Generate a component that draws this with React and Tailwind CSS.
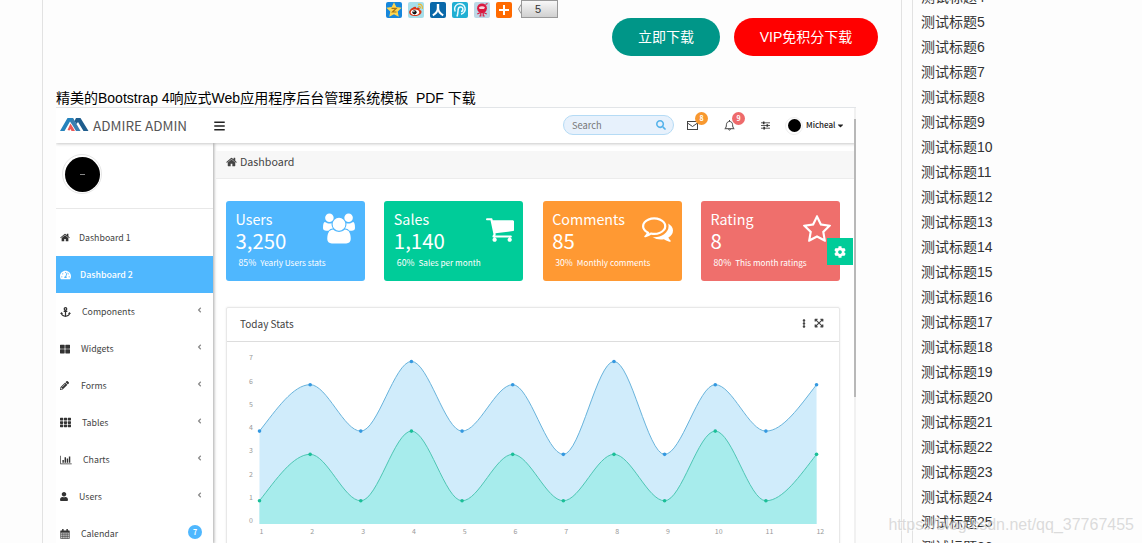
import { FaTachometerAlt, FaAnchor, FaThLarge, FaPencilAlt, FaTh, FaUser, FaBars, FaSearch, FaEllipsisV, FaExpandArrowsAlt, FaCog, FaCaretDown, FaAngleLeft } from 'react-icons/fa';

const HOME_PATH =
  'M1472 992v480q0 26-19 45t-45 19h-384v-384h-256v384h-384q-26 0-45-19t-19-45v-480q0-1 .5-3t.5-3l575-474 575 474q1 2 1 6zm223-69l-62 74q-8 9-21 11h-3q-13 0-21-7l-692-577-692 577q-12 8-24 7-13-2-21-11l-62-74q-8-10-7-23.5t11-21.5l719-599q32-26 76-26t76 26l244 204v-195q0-14 9-23t23-9h192q14 0 23 9t9 23v408l219 182q10 8 11 21.5t-7 23.5z';
const BARS_PATH =
  'M640 896v512h-256v-512h256zm384-512v1024h-256v-1024h256zm1024 1152v128h-2048v-1536h128v1408h1920zm-640-896v768h-256v-768h256zm384-384v1152h-256v-1152h256z';
const USERS_PATH =
  'M593 896q-162 5-265 128h-134q-82 0-138-40.5t-56-118.5q0-353 124-353 6 0 43.5 21t97.5 42.5 119 21.5q67 0 133-23-5 37-5 66 0 139 81 256zm1071 637q0 120-73 189.5t-194 69.5h-874q-121 0-194-69.5t-73-189.5q0-53 3.5-103.5t14-109 26.5-108.5 43-97.5 62-81 85.5-53.5 111.5-20q10 0 43 21.5t73 48 107 48 135 21.5 135-21.5 107-48 73-48 43-21.5q61 0 111.5 20t85.5 53.5 62 81 43 97.5 26.5 108.5 14 109 3.5 103.5zm-1024-1277q0 106-75 181t-181 75-181-75-75-181 75-181 181-75 181 75 75 181zm704 384q0 159-112.5 271.5t-271.5 112.5-271.5-112.5-112.5-271.5 112.5-271.5 271.5-112.5 271.5 112.5 112.5 271.5zm576 225q0 78-56 118.5t-138 40.5h-134q-103-123-265-128 81-117 81-256 0-29-5-66 66 23 133 23 59 0 119-21.5t97.5-42.5 43.5-21q124 0 124 353zm-128-609q0 106-75 181t-181 75-181-75-75-181 75-181 181-75 181 75 75 181z';
const CART_PATH =
  'M640 1536q0 52-38 90t-90 38-90-38-38-90 38-90 90-38 90 38 38 90zm896 0q0 52-38 90t-90 38-90-38-38-90 38-90 90-38 90 38 38 90zm128-1088v512q0 24-16.5 42.5t-40.5 21.5l-1044 122q13 60 13 70 0 16-24 64h920q26 0 45 19t19 45-19 45-45 19h-1024q-26 0-45-19t-19-45q0-11 8-31.5t16-36 21.5-40 15.5-29.5l-177-823h-204q-26 0-45-19t-19-45 19-45 45-19h256q16 0 28.5 6.5t19.5 15.5 13 24.5 8 26 5.5 29.5 4.5 26h1201q26 0 45 19t19 45z';
const COMMENTS_PATH =
  'M704 384q-153 0-286 52t-211.5 141-78.5 191q0 82 53 158t149 132l97 56-35 84q34-20 62-39l44-31 53 10q78 14 153 14 153 0 286-52t211.5-141 78.5-191-78.5-191-211.5-141-286-52zm0-128q191 0 353.5 68.5t256.5 186.5 94 257-94 257-256.5 186.5-353.5 68.5q-86 0-176-16-124 88-278 128-36 9-86 16h-3q-11 0-20.5-8t-11.5-21q-1-3-1-6.5t.5-6.5 2-6l2.5-5 3.5-5.5 4-5 4.5-5 4-4.5q5-6 23-25t26-29.5 22.5-29 25-38.5 20.5-44q-124-72-195-177t-71-224q0-139 94-257t256.5-186.5 353.5-68.5zm822 1169q10 24 20.5 44t25 38.5 22.5 29 26 29.5 23 25q1 1 4 4.5t4.5 5 4 5 3.5 5.5l2.5 5 2 6 .5 6.5-1 6.5q-3 14-13 22t-22 7q-50-7-86-16-154-40-278-128-90 16-176 16-271 0-472-132 58 4 88 4 161 0 309-45t264-129q125-92 192-212t67-254q0-77-23-152 129 71 204 178t75 230q0 120-71 224.5t-195 176.5z';
const STAR_PATH =
  'M1201 1004l306-297-422-62-189-382-189 382-422 62 306 297-73 421 378-199 377 199zm527-357q0 22-26 48l-363 354 86 500q1 7 1 20 0 50-41 50-19 0-40-12l-449-236-449 236q-22 12-40 12-21 0-31.5-14.5t-10.5-35.5q0-6 2-20l86-500-364-354q-25-27-25-48 0-37 56-46l502-73 225-455q19-41 49-41t49 41l225 455 502 73q56 9 56 46z';

function Glyph({ path, viewBox, className }) {
  return (
    <svg viewBox={viewBox} className={className} fill="currentColor">
      <path d={path} />
    </svg>
  );
}

const HomeIcon = ({ className }) => <Glyph path={HOME_PATH} viewBox="64 128 1664 1536" className={className} />;
const ChartsIcon = ({ className }) => <Glyph path={BARS_PATH} viewBox="0 0 2048 1792" className={className} />;

function CalendarIcon({ className }) {
  return (
    <svg viewBox="0 0 13 14" className={className} fill="none" stroke="currentColor">
      <path d="M.5 2.500h12v11H.5zM.5 5.500h12M3.500 5.500v8M6.500 5.500v8M9.500 5.500v8M.5 8.200h12M.5 10.800h12" />
      <path d="M.5 3.800h12M3.500 0v4M9.500 0v4" strokeWidth="2" />
    </svg>
  );
}

const menu = [
  { label: 'Dashboard 1', icon: HomeIcon, iconClass: 'w-[10px] h-[9px]', gap: 'ml-[9px]' },
  { label: 'Dashboard 2', icon: FaTachometerAlt, iconClass: 'w-[11px] h-[10px]', gap: 'ml-[9px]', active: true },
  { label: 'Components', icon: FaAnchor, iconClass: 'w-[11px] h-[10px]', gap: 'ml-[11px]', arrow: true },
  { label: 'Widgets', icon: FaThLarge, iconClass: 'w-[10px] h-[10px]', gap: 'ml-[11px]', arrow: true },
  { label: 'Forms', icon: FaPencilAlt, iconClass: 'w-[9px] h-[9px]', gap: 'ml-[12px]', arrow: true },
  { label: 'Tables', icon: FaTh, iconClass: 'w-[11px] h-[11px]', gap: 'ml-[11px]', arrow: true },
  { label: 'Charts', icon: ChartsIcon, iconClass: 'w-[12px] h-[10px]', gap: 'ml-[11px]', arrow: true },
  { label: 'Users', icon: FaUser, iconClass: 'w-[8px] h-[9px]', gap: 'ml-[11px]', arrow: true },
  { label: 'Calendar', icon: CalendarIcon, iconClass: 'w-[10px] h-[10px]', gap: 'ml-[11px]', badge: 7 },
];

const cards = [
  { title: 'Users', value: '3,250', percent: '85%', text: 'Yearly Users stats', color: 'bg-[#4fb7fe]', path: USERS_PATH, viewBox: '0 0 1920 1792', iconClass: 'w-[32px] h-[31px] mt-[12px] mr-[10px]' },
  { title: 'Sales', value: '1,140', percent: '60%', text: 'Sales per month', color: 'bg-[#00cc99]', path: CART_PATH, viewBox: '0 256 1664 1408', iconClass: 'w-[28px] h-[24px] mt-[17px] mr-[9px]' },
  { title: 'Comments', value: '85', percent: '30%', text: 'Monthly comments', color: 'bg-[#ff9933]', path: COMMENTS_PATH, viewBox: '0 256 1792 1410', iconClass: 'w-[31px] h-[25px] mt-[16px] mr-[9px]' },
  { title: 'Rating', value: '8', percent: '80%', text: 'This month ratings', color: 'bg-[#ef6f6c]', path: STAR_PATH, viewBox: '64 32 1664 1590', iconClass: 'w-[28px] h-[27px] mt-[14px] mr-[9px]' },
];

const blueSeries = [4, 6, 4, 7, 4, 6, 3, 7, 3, 6, 4, 6];
const greenSeries = [1, 3, 1, 4, 1, 3, 1, 3, 1, 4, 1, 3];

// chart geometry, in px inside the chart body
const X0 = 32.5;
const STEP = 50.64;
const BASE = 182;
const UNIT = 23.22;

const toPoints = (series) => series.map((v, i) => [X0 + i * STEP, BASE - v * UNIT]);

// monotone cubic line: flat at every peak and valley
function smoothPath(points) {
  const last = points.length - 1;
  const slope = (i) => (points[i + 1][1] - points[i][1]) / STEP;
  const tangents = points.map((p, i) => {
    if (i === 0) return slope(0) * 1.4;
    if (i === last) return slope(last - 1) * 1.4;
    return 0;
  });
  let d = `M${points[0][0]} ${points[0][1]}`;
  for (let i = 0; i < last; i++) {
    const [x1, y1] = points[i];
    const [x2, y2] = points[i + 1];
    const dx = STEP / 3;
    d += `C${x1 + dx} ${y1 + tangents[i] * dx} ${x2 - dx} ${y2 - tangents[i + 1] * dx} ${x2} ${y2}`;
  }
  return d;
}

function Series({ data, fill, line, dot }) {
  const points = toPoints(data);
  const path = smoothPath(points);
  return (
    <g>
      <path d={`${path}V${BASE}H${X0}Z`} fill={fill} />
      <path d={path} fill="none" stroke={line} strokeWidth="1" />
      {points.map(([x, y], i) => (
        <circle key={i} cx={x} cy={y} r="1.8" fill={dot} />
      ))}
    </g>
  );
}

function StatsChart() {
  return (
    <svg width="612" height="210" viewBox="0 0 612 210" className="block">
      <Series data={blueSeries} fill="#d0ecfb" line="#69b4dc" dot="#3498e0" />
      <Series data={greenSeries} fill="#a7ecec" line="#4fc6b4" dot="#1bbf98" />
      <g fill="#999" fontSize="7">
        {[0, 1, 2, 3, 4, 5, 6, 7].map((n) => (
          <text key={n} x="24" y={181 - n * 23.22} textAnchor="middle">{n}</text>
        ))}
        {blueSeries.map((_, i) => (
          <text key={i} x={34.5 + i * 50.8} y="192" textAnchor="middle">{i + 1}</text>
        ))}
      </g>
    </svg>
  );
}

function ShareBar() {
  return (
    <div className="flex h-[18px] pl-[343px]">
      <div className="flex gap-[6px] pt-[2px]">
        <svg width="16" height="16" viewBox="0 0 16 16">
          <rect width="16" height="16" rx="2" fill="#1687dc" />
          <path d="M8 .3l2.300 4.700 5.400.7-4 3.700 1 5.400L8 12.300l-4.700 2.500 1-5.400-4-3.700 5.400-.7z" fill="#ffd64f" />
          <path d="M5.500 6.300h4.800L6.500 10h4" fill="none" stroke="#a87412" strokeWidth="1.200" />
        </svg>
        <svg width="16" height="16" viewBox="0 0 16 16">
          <rect width="16" height="16" rx="2" fill="#a6deea" />
          <path d="M7 4.700c-3 .7-6.200 3.600-5.800 6 .4 2.700 4 3.700 7.300 3.200 3.400-.6 5.300-2.700 5-4.500-.3-1.400-2-1.400-2-1.400s1-2.300-1.200-2.400C9 5.500 8 6.400 8 6.400s.7-2.100-1-1.700z" fill="#d93516" />
          <ellipse cx="7" cy="10.300" rx="4.200" ry="2.800" fill="#fff" />
          <circle cx="6.500" cy="10.300" r="2.100" fill="#111" />
          <circle cx="5.900" cy="9.600" r=".7" fill="#fff" />
          <path d="M10 2.300c3-.6 5 1.500 4.300 4.600M10.200 4.400c1.500-.3 2.500.5 2.200 2" fill="none" stroke="#eeb62d" strokeWidth="1.200" />
        </svg>
        <svg width="16" height="16" viewBox="0 0 16 16">
          <rect width="16" height="16" rx="2" fill="#0968a9" />
          <path d="M7.800 2v4c0 3-1.800 5.600-5 7.300M8.200 2v4c0 3 1.800 5.600 5 7.300" fill="none" stroke="#fff" strokeWidth="2" />
        </svg>
        <svg width="16" height="16" viewBox="0 0 16 16">
          <rect width="16" height="16" rx="2" fill="#20afd3" />
          <path d="M3.200 9.500A5.300 5.300 0 1 1 9 12.200" fill="none" stroke="#e9fbff" strokeWidth="1.500" />
          <path d="M5 14.500C6 12 5.800 9.500 6.300 7.200a2.300 2.300 0 1 1 2.700 2.300" fill="none" stroke="#e9fbff" strokeWidth="1.500" />
        </svg>
        <svg width="16" height="16" viewBox="0 0 16 16">
          <rect width="16" height="16" rx="2" fill="#bcd8e6" />
          <circle cx="8" cy="6.300" r="4.900" fill="#db193f" />
          <path d="M5 5.200c1.600-1.300 4.400-1.300 6 0l-1 1.800H5.500z" fill="#f7d5dc" />
          <path d="M11.500 2.500l2-1M6.300 10.500l-3 1.500M6.800 10.500v3.500h-1.500M9.200 10.500v3.500h1.500M9.700 10.500l3 1.500" stroke="#db193f" strokeWidth="1.200" fill="none" />
        </svg>
        <svg width="16" height="16" viewBox="0 0 16 16">
          <rect width="16" height="16" rx="2" fill="#ff6a00" />
          <path d="M8 3v10M3 8h10" stroke="#fff" strokeWidth="2" />
        </svg>
      </div>
      <div className="flex ml-[6px]">
        <svg width="3" height="18" viewBox="0 0 3 18">
          <path d="M3 4.500L.5 9 3 13.500" fill="#eee" stroke="#999" />
        </svg>
        <div className="w-[37px] h-[18px] border border-[#999] bg-linear-to-b from-[#f8f8f8] to-[#d0d0d0] text-[11px] leading-[17px] text-center text-[#333]">
          <span className="mr-[3px]">5</span>
        </div>
      </div>
    </div>
  );
}

function TopBar() {
  return (
    <div className="relative z-10 flex items-center h-[35px] bg-white shadow-[0_1px_3px_rgba(0,0,0,0.22)] text-[#444]">
      <svg width="29" height="13" viewBox="0 0 29 13" className="ml-[4px] -mt-[3px]">
        <path d="M0 13L7.500 0H13l1.500 3.500-2 3L10 3.500 4.500 13z" fill="#2583bd" />
        <path d="M7.500 12L10.500 5.500l4.500 7.500h-3.500l-1-2-1 1.500z" fill="#ee5755" />
        <path d="M13 0l7.500 13H16L10.500 4z" fill="#3a7fb0" />
        <path d="M14.500 3L16 0h4.500L28.500 13H23.500L18 4l-1.500 2z" fill="#1f5d8d" />
      </svg>
      <span className="ml-[4px] w-[95px] text-[13.500px] leading-[18px] whitespace-nowrap text-[#555] -mt-[2px]">ADMIRE ADMIN</span>
      <FaBars className="ml-[26px] w-[11px] h-[12px] text-[#222]" />
      <div className="flex items-center justify-between ml-[338px] -mt-[2px] w-[111px] h-[20px] px-[8px] rounded-full border border-[#b5dbf5] bg-[#e7f1fc]">
        <span className="text-[9.300px] leading-[14px] text-[#777]">Search</span>
        <FaSearch className="w-[10px] h-[10px] -mr-[1px] text-[#56b3ea]" />
      </div>
      <div className="relative ml-[13px]">
        <svg width="11" height="9" viewBox="0 0 11 9" fill="none" stroke="#444" className="block">
          <rect x=".5" y=".5" width="10" height="8" />
          <path d="M.5 2L5.500 5.500l5-3.500" />
        </svg>
        <span className="absolute -top-[9px] left-[8px] w-[13px] h-[13px] rounded-full bg-[#f8982f] text-white text-[7px] leading-[13px] font-bold text-center">8</span>
      </div>
      <div className="relative ml-[26px]">
        <svg width="11" height="11" viewBox="0 0 11 11" fill="none" stroke="#444" className="block">
          <path d="M.8 8.700c1.400-1 1.500-2.200 1.600-4C2.600 2.600 3.700 1.500 5.500 1.500s2.900 1.100 3.100 3.200c.1 1.800.2 3 1.600 4zM5.500 0v1.500M4.500 9.200c.2 1.200 1.800 1.200 2 0" />
        </svg>
        <span className="absolute -top-[8px] left-[8px] w-[13px] h-[13px] rounded-full bg-[#ee6a6b] text-white text-[7px] leading-[13px] font-bold text-center">9</span>
      </div>
      <svg width="9" height="9" viewBox="0 0 10 9" className="ml-[26px]" stroke="#333">
        <path d="M0 1.500h10M0 4.500h10M0 7.500h10" strokeWidth=".9" />
        <path d="M3 0v3M7 3v3M3.500 6v3" strokeWidth="1.800" />
      </svg>
      <div className="flex items-center justify-center ml-[15px] w-[18px] h-[18px] rounded-full border border-[#eee] bg-white">
        <div className="w-[13px] h-[13px] rounded-full bg-black" />
      </div>
      <span className="ml-[3px] w-[29px] -mt-[2px] text-[8px] leading-[12px] font-medium whitespace-nowrap text-[#222]">Micheal</span>
      <FaCaretDown className="w-[7px] h-[9px] ml-[2px] text-[#222]" />
    </div>
  );
}

function Sidebar() {
  return (
    <div className="w-[157px] shrink-0 bg-white text-[#444] shadow-[1px_0_3px_rgba(0,0,0,0.35)]">
      <div className="h-[66px] border-b border-[#e8e8e8] pt-[11px] pl-[6px]">
        <div className="flex items-center justify-center w-[40px] h-[40px] rounded-full border border-[#e6e6e6] bg-white">
          <div className="flex items-center justify-center w-[35px] h-[35px] rounded-full bg-black">
            <div className="w-[5px] h-px bg-[#888]" />
          </div>
        </div>
      </div>
      <div className="pt-[10px]">
        {menu.map(({ label, icon: Icon, iconClass, gap, active, arrow, badge }) => (
          <div
            key={label}
            className={`flex items-center h-[37px] pl-[4px] text-[8.800px] leading-[14px] ${active ? 'bg-[#4fb7fe] text-white font-medium' : ''}`}
          >
            <Icon className={`${iconClass} shrink-0 ${active ? '' : 'text-[#333]'}`} />
            <span className={gap}>{label}</span>
            {arrow && <FaAngleLeft className="w-[7px] h-[8px] ml-auto mr-[10px] mb-[4px] text-[#888]" />}
            {badge && (
              <span className="flex items-center justify-center w-[14px] h-[14px] ml-auto mr-[11px] mb-[4px] rounded-full bg-[#4fb7fe] text-white text-[7px] font-bold">
                {badge}
              </span>
            )}
          </div>
        ))}
      </div>
    </div>
  );
}

function StatCard({ card }) {
  return (
    <div className={`flex items-start justify-between w-[139px] h-[80px] rounded-[3px] text-white ${card.color}`}>
      <div className="pl-[9.500px] pt-[7px] whitespace-nowrap w-0">
        <div className="text-[14.300px] leading-[21px]">{card.title}</div>
        <div className="text-[20.400px] leading-[23px]">{card.value}</div>
        <div className="flex gap-[4px] pl-[3px] mt-[4px] leading-[13px]">
          <span className="text-[8.700px]">{card.percent}</span>
          <span className="text-[8.200px]">{card.text}</span>
        </div>
      </div>
      <Glyph path={card.path} viewBox={card.viewBox} className={card.iconClass} />
    </div>
  );
}

function Dashboard() {
  return (
    <div className="relative w-[800px] h-[436px] overflow-hidden bg-white border-t border-[#e2e5e8] font-['Noto_Sans_CJK_SC',sans-serif]">
      <TopBar />
      <div className="flex h-[401px]">
        <Sidebar />
        <div className="flex-1 pl-[3px] pt-[8px]">
          <div className="flex items-center h-[28px] pl-[10px] pb-[5px] bg-[#f7f7f7] border-b border-[#ececec] text-[#444]">
            <HomeIcon className="w-[11px] h-[10px]" />
            <span className="ml-[3px] text-[10.700px] leading-[16px]">Dashboard</span>
          </div>
          <div className="flex justify-between ml-[10px] mt-[22px] w-[614px]">
            {cards.map((card) => (
              <StatCard key={card.title} card={card} />
            ))}
          </div>
          <div className="ml-[10px] mt-[26px] w-[614px] h-[260px] rounded-[2px] border border-[#e8e8e8] shadow-[0_0_2px_rgba(0,0,0,0.1)]">
            <div className="flex items-center h-[34px] pl-[13px] pr-[15px] pb-[3px] border-b border-[#ddd] text-[#444]">
              <span className="text-[10px] leading-[15px]">Today Stats</span>
              <FaEllipsisV className="ml-auto w-[6px] h-[9px]" />
              <FaExpandArrowsAlt className="ml-[7px] w-[10px] h-[10px]" />
            </div>
            <StatsChart />
          </div>
        </div>
      </div>
      {/* settings handle */}
      <div className="absolute right-[3px] top-[130px] z-20 flex items-center justify-center w-[26px] h-[27px] bg-[#00cc99] text-white">
        <FaCog className="w-[12px] h-[12px]" />
      </div>
      {/* scrollbar */}
      <div className="absolute right-0 top-0 z-20 w-[2px] h-full pt-[11px] bg-[#f1f1f1]">
        <div className="h-[278px] bg-[#b8b8b8]" />
      </div>
    </div>
  );
}

export default function App() {
  return (
    <div className="relative flex h-[543px] w-[1142px] overflow-hidden bg-[#fdfdfd] text-sm font-['Liberation_Sans','Noto_Sans_CJK_SC',sans-serif]">
      <div className="ml-[42px] w-[860px] shrink-0 border-x border-[#e2e2e2]">
        <ShareBar />
        <div className="flex justify-end gap-[14px] pr-[23px] text-white leading-[38px] text-center">
          <button className="w-[108px] h-[38px] rounded-full bg-[#009688]">立即下载</button>
          <button className="w-[144px] h-[38px] rounded-full bg-[#ff0000]">VIP免积分下载</button>
        </div>
        <div className="px-[13px]">
          <p className="mt-[32px] h-[19px] leading-[20px] text-black whitespace-pre">精美的Bootstrap 4响应式Web应用程序后台管理系统模板  PDF 下载</p>
          <Dashboard />
        </div>
      </div>
      <div className="ml-[10px] flex-1 border-l border-[#e2e2e2] pl-[8px]">
        <ul className="-mt-[16px]">
          {Array.from({ length: 23 }, (_, i) => (
            <li key={i} className="h-[25px] leading-[26px] text-[#333]">测试标题{i + 4}</li>
          ))}
        </ul>
      </div>
      <div className="absolute right-[8px] bottom-[7px] text-[16px] leading-[22px] text-[#c4c4c4]/60 [text-shadow:1px_1px_0_rgba(255,255,255,0.5)]">
        https://blog.csdn.net/qq_37767455
      </div>
    </div>
  );
}
